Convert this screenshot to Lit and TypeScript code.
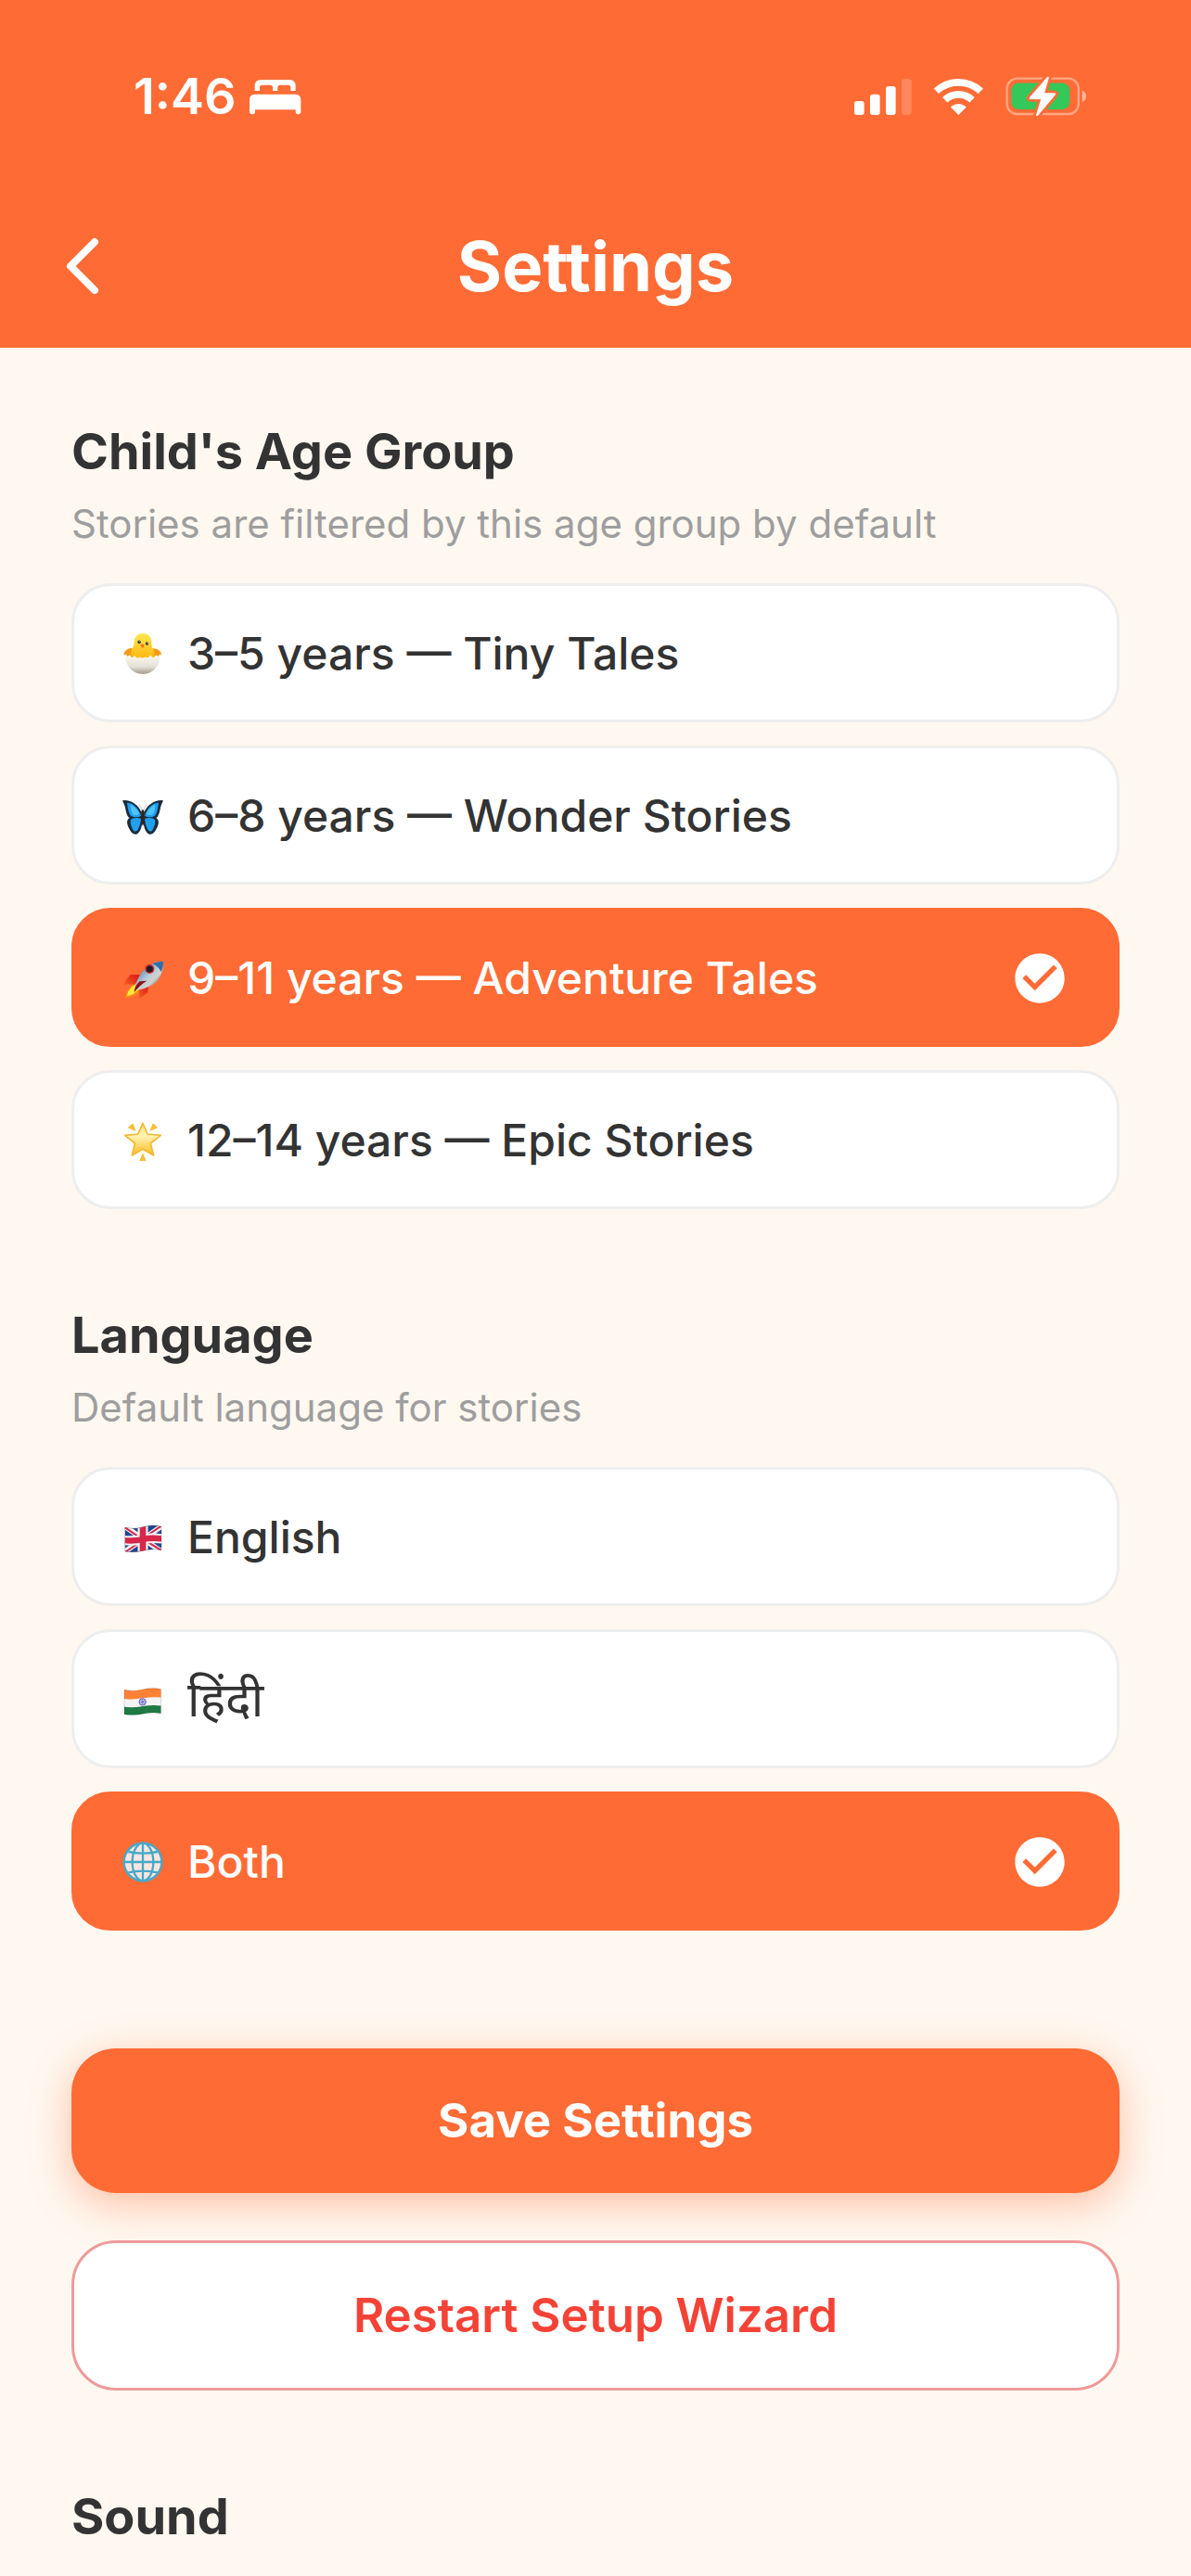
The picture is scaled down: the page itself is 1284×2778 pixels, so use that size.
import { LitElement, html, css, svg } from "lit";
import { customElement, property, state } from "lit/decorators.js";
import { classMap } from "lit/directives/class-map.js";

interface Option {
  value: string;
  label: string;
  icon: unknown;
  lang?: string;
}

const chickIcon = svg`
  <svg viewBox="65 38 136 136" aria-hidden="true">
    <defs>
      <linearGradient id="chick" x1="0" y1="0" x2="0" y2="1">
        <stop offset="0" stop-color="#ffe94f" />
        <stop offset="1" stop-color="#fdb813" />
      </linearGradient>
      <linearGradient id="shell" x1="0" y1="0" x2="0" y2="1">
        <stop offset="0" stop-color="#fbf8f0" />
        <stop offset="0.6" stop-color="#e6e1d8" />
        <stop offset="1" stop-color="#a39a8c" />
      </linearGradient>
    </defs>
    <path fill="#f79a17" d="M104 90C90 82 72 92 69 110l9-2 3 7 8-4 6 9h16zM158 90c16-6 34 4 38 18l-8 0-3 7-7-4-8 9h-16z" />
    <path fill="url(#chick)" d="M133 38c-18 0-29 13-29 29 0 12-4 17-8 25-3 8-3 18 2 28h70c5-10 4-20 0-28-4-7-6-13-6-25 0-16-11-29-29-29z" />
    <circle cx="121" cy="67" r="5.5" fill="#2e3b3a" />
    <circle cx="147" cy="72" r="5.5" fill="#2e3b3a" />
    <circle cx="123" cy="65" r="1.8" fill="#fff" />
    <circle cx="149" cy="70" r="1.8" fill="#fff" />
    <path fill="#f0721a" d="M125 76q7-6 13 1-1 8-6 10-6-3-7-11z" />
    <path fill="url(#shell)" d="M74 113l7 5 8-7 8 9 9-8 8 10 9-5 9 9 10-10 8 4 8-9 9 9 8-7 8 5 7-4c0 30-22 60-56 60s-59-27-60-61z" />
  </svg>
`;

const butterflyIcon = svg`
  <svg viewBox="67 51 132 132" aria-hidden="true">
    <path fill="none" stroke="#b5b0ad" stroke-width="2" d="M131 100Q127 88 121 80M135 100Q139 88 145 80" />
    <path fill="#1b2c3a" d="M129 106C119 80 94 64 70 66c-6 1 2 9 5 20 3 12 5 31 15 37-14 9-6 26 0 37 4 10 13 18 22 16 12-5 17-20 19-38z" />
    <path fill="#1b2c3a" d="M137 106C147 80 172 64 196 66c6 1-2 9-5 20-3 12-5 31-15 37 14 9 6 26 0 37-4 10-13 18-22 16-12-5-17-20-19-38z" />
    <path fill="#1fa0f2" d="M127 116C119 90 101 75 82 74c2 12 4 38 15 44 8 4 20 4 30-2zM127 126c-13-5-28-3-33 4-3 9 2 22 7 31 5 8 13 8 18-4 4-9 7-20 8-31z" />
    <path fill="#1fa0f2" d="M139 116c8-26 26-41 45-42-2 12-4 38-15 44-8 4-20 4-30-2zM139 126c13-5 28-3 33 4 3 9-2 22-7 31-5 8-13 8-18-4-4-9-7-20-8-31z" />
    <path fill="#4fc3fb" d="M122 111C114 94 104 85 94 81c-1 14 3 27 9 32 6 2 14 1 19-2zM144 111c8-17 18-26 28-30 1 14-3 27-9 32-6 2-14 1-19-2z" />
    <path fill="#33241f" d="M133 97c4 0 6 5 5 13 2 14 0 30-5 40-5-10-7-26-5-40-1-8 1-13 5-13z" />
  </svg>
`;

const rocketIcon = svg`
  <svg viewBox="67 66 132 132" aria-hidden="true">
    <defs>
      <linearGradient id="hull" x1="0" y1="0" x2="1" y2="1">
        <stop offset="0.2" stop-color="#4a87bd" />
        <stop offset="0.5" stop-color="#b9cbd6" />
        <stop offset="0.65" stop-color="#d3d3ce" />
        <stop offset="0.85" stop-color="#5b6f82" />
      </linearGradient>
      <linearGradient id="fin" x1="1" y1="0" x2="0" y2="1">
        <stop offset="0.3" stop-color="#e3201b" />
        <stop offset="1" stop-color="#ff9d1e" />
      </linearGradient>
    </defs>
    <path fill="url(#fin)" d="M124 120L92 121Q80 134 69 154q18-6 40-2zM152 154l-4 24q-12 12-29 22 4-22 1-34z" />
    <path fill="#ff8a16" d="M108 149q-28 13-33 47 36-2 48-24z" />
    <path fill="#ffe83b" d="M108 153q-22 12-27 37 26-5 37-23z" />
    <path fill="url(#hull)" d="M198 77c-31 0-60 20-73 43-9 15-14 28-18 39l11 11c22-4 48-14 63-32 14-17 20-41 17-61z" />
    <path fill="#2e6fa8" d="M198 77c-12 0-24 3-34 8 10 4 22 14 28 26 6-11 8-24 6-34z" />
    <path fill="#8d1216" d="M146 140q-24 14-41 38 0-20 18-36z" />
    <circle cx="155" cy="102" r="15" fill="#d3262b" />
    <circle cx="155" cy="102" r="10.5" fill="#1a1d24" />
  </svg>
`;

const starIcon = svg`
  <svg viewBox="67 51 132 132" aria-hidden="true">
    <defs>
      <linearGradient id="star" x1="0" y1="0" x2="0" y2="1">
        <stop offset="0" stop-color="#ffe27a" />
        <stop offset="0.4" stop-color="#fff3b4" />
        <stop offset="1" stop-color="#fdbb1b" />
      </linearGradient>
    </defs>
    <g fill="#f6bf3a" stroke="#f6bf3a" stroke-width="4" stroke-linejoin="round">
      <path d="M100 64l8 20-21-9zM166 64l-8 20 20-9zM133 161l8 21h-17z" />
    </g>
    <path fill="url(#star)" stroke="#f7b733" stroke-width="5" stroke-linejoin="round" d="M133 61l15 35 43 4-33 26 10 39-35-20-35 20 9-39-32-26 42-4z" />
  </svg>
`;

const ukFlagIcon = svg`
  <svg viewBox="67 45 132 132" aria-hidden="true">
    <defs>
      <clipPath id="uk-wave"><path d="M75 78q28 8 58-1t60-1v76q-28-6-58 2t-60 2z" /></clipPath>
    </defs>
    <g clip-path="url(#uk-wave)">
      <rect x="70" y="66" width="130" height="98" fill="#20458f" />
      <path stroke="#f4f4f4" stroke-width="17" d="M70 72L198 160M198 72L70 160" />
      <path stroke="#d8274a" stroke-width="6" d="M70 75L133 118M133 116L198 156M198 70L133 114M133 120L70 162" />
      <path stroke="#f4f4f4" stroke-width="33" fill="none" d="M133 66v98" />
      <path stroke="#f4f4f4" stroke-width="31" fill="none" d="M70 120q32 4 63-3t66-1" />
      <path stroke="#d8274a" stroke-width="20" fill="none" d="M133 66v98" />
      <path stroke="#d8274a" stroke-width="19" fill="none" d="M70 120q32 4 63-3t66-1" />
    </g>
    <path fill="none" stroke="#000" stroke-opacity="0.25" stroke-width="2" d="M75 78q28 8 58-1t60-1v76q-28-6-58 2t-60 2z" />
  </svg>
`;

const indiaFlagIcon = svg`
  <svg viewBox="67 570 132 132" aria-hidden="true">
    <defs>
      <clipPath id="in-wave"><path d="M73 604q28 7 60-1t59-1v78q-28-5-59 2t-60 1z" /></clipPath>
    </defs>
    <g clip-path="url(#in-wave)">
      <rect x="68" y="590" width="130" height="100" fill="#f3f3f5" />
      <path fill="#ff8136" d="M68 590h130v39q-32-4-65 2t-65 1z" />
      <path fill="#1f7a45" d="M68 659q32 4 65-2t65-1v40H68z" />
    </g>
    <circle cx="132" cy="643" r="11" fill="#dcdcf3" stroke="#5c5cc0" stroke-width="3" />
    <path stroke="#5c5cc0" stroke-width="2" d="M132 633v20M122 643h20M125 636l14 14M139 636l-14 14" />
    <path fill="none" stroke="#000" stroke-opacity="0.22" stroke-width="2" d="M73 604q28 7 60-1t59-1v78q-28-5-59 2t-60 1z" />
  </svg>
`;

const globeIcon = svg`
  <svg viewBox="67 46 132 132" aria-hidden="true">
    <circle cx="133" cy="112" r="63" fill="#fbe5df" />
    <g fill="none" stroke="#45a9c8" stroke-width="7">
      <circle cx="133" cy="112" r="61" />
      <ellipse cx="133" cy="112" rx="34" ry="61" />
      <path d="M133 52v120M73 112h120M86 79q47 10 94 0M86 146q47-10 94 0" />
    </g>
  </svg>
`;

const checkIcon = svg`
  <svg class="check" viewBox="0 0 24 24" aria-hidden="true">
    <path fill="#fff" d="M12 2C6.48 2 2 6.48 2 12s4.48 10 10 10 10-4.48 10-10S17.52 2 12 2zm-2 15l-5-5 1.41-1.41L10 14.17l7.59-7.59L19 8l-9 9z" />
  </svg>
`;

const ageOptions: Option[] = [
  { value: "3-5", label: "3–5 years — Tiny Tales", icon: chickIcon },
  { value: "6-8", label: "6–8 years — Wonder Stories", icon: butterflyIcon },
  { value: "9-11", label: "9–11 years — Adventure Tales", icon: rocketIcon },
  { value: "12-14", label: "12–14 years — Epic Stories", icon: starIcon },
];

const languageOptions: Option[] = [
  { value: "en", label: "English", icon: ukFlagIcon },
  { value: "hi", label: "हिंदी", icon: indiaFlagIcon, lang: "hi" },
  { value: "both", label: "Both", icon: globeIcon },
];

@customElement("status-bar")
export class StatusBar extends LitElement {
  static styles = css`
    :host {
      display: flex;
      align-items: center;
      justify-content: space-between;
      box-sizing: border-box;
      height: 198px;
      padding: 10px 112px 0 144px;
      color: #fff;
    }
    .group {
      display: flex;
      align-items: center;
    }
    .left {
      gap: 14px;
    }
    .right {
      gap: 22px;
    }
    .time {
      font-size: 54px;
      font-weight: 600;
      line-height: 60px;
    }
    svg {
      display: block;
      fill: #fff;
    }
    .bed {
      width: 56px;
      height: 40px;
    }
    .signal {
      width: 64px;
      height: 41px;
    }
    .wifi {
      width: 55px;
      height: 41px;
    }
    .battery {
      width: 89px;
      height: 44px;
    }
  `;

  render() {
    return html`
      <div class="group left">
        <span class="time">1:46</span>
        <svg class="bed" viewBox="687 102 168 120" aria-hidden="true">
          <path d="M687 173q0-18 18-18h130q18 0 18 18v38a8 8 0 0 1-17 0v-6H705v6a9 9 0 0 1-18 0z" />
          <path d="M704 144v-16q0-20 20-20h92q20 0 20 20v16h-16v-11q0-8-8-8h-26q-8 0-8 8v11h-16v-11q0-8-8-8h-26q-8 0-8 8v11z" />
        </svg>
      </div>
      <div class="group right">
        <svg class="signal" viewBox="120 69 192 123" aria-hidden="true">
          <rect x="123" y="144" width="32" height="45" rx="9" />
          <rect x="174" y="122" width="32" height="67" rx="9" />
          <rect x="225" y="96" width="32" height="93" rx="9" />
          <rect x="276" y="72" width="32" height="117" rx="9" opacity="0.2" />
        </svg>
        <svg class="wifi" viewBox="378 69 165 123" aria-hidden="true">
          <path fill="none" stroke="#fff" stroke-width="23" d="M388 112A105 105 0 0 1 532 112M416 140A64 64 0 0 1 504 140" />
          <path d="M460 189L436 165Q434 163 437 161A36 36 0 0 1 483 161Q486 163 484 165z" />
        </svg>
        <svg class="battery" viewBox="609 64 267 133" aria-hidden="true">
          <rect x="616" y="72" width="233" height="116" rx="33" fill="none" stroke="#fff" stroke-width="7" opacity="0.4" />
          <path opacity="0.5" d="M861 111q13 6 13 19t-13 19z" />
          <rect x="630" y="87" width="190" height="86" rx="24" fill="#34c759" />
          <path fill="#ff6b35" stroke="#ff6b35" stroke-width="24" stroke-linejoin="round" d="M749 70L692 136l39 1-17 54 57-68-37-1z" />
          <path stroke="#fff" stroke-width="7" stroke-linejoin="round" d="M749 70L692 136l39 1-17 54 57-68-37-1z" />
        </svg>
      </div>
    `;
  }
}

@customElement("option-group")
export class OptionGroup extends LitElement {
  @property() heading = "";
  @property() hint = "";
  @property() name = "";
  @property() value = "";
  @property({ attribute: false }) options: Option[] = [];

  static styles = css`
    :host {
      display: block;
    }
    .heading {
      margin: 0 0 10px;
      font-size: 54px;
      font-weight: 700;
      line-height: 76px;
    }
    .hint {
      margin: 0 0 34px;
      color: #9e9e9e;
      font-size: 42px;
      font-weight: 400;
      line-height: 60px;
    }
    .list {
      display: flex;
      flex-direction: column;
      gap: 25px;
    }
    .option {
      display: flex;
      align-items: center;
      gap: 26px;
      box-sizing: border-box;
      min-height: 150px;
      padding: 21px 51px 19px 52px;
      border: 3px solid #eee;
      border-radius: 42px;
      background: #fff;
      font-size: 48px;
      font-weight: 500;
      line-height: 68px;
      cursor: pointer;
    }
    .option.selected {
      border-color: #ff6b35;
      background: #ff6b35;
      color: #fff;
    }
    .icon {
      flex: none;
      width: 44px;
      height: 44px;
    }
    .icon svg {
      display: block;
    }
    .label {
      flex: 1;
    }
    .label:lang(hi) {
      font-size: 52px;
      font-weight: 400;
    }
    .mark {
      display: grid;
      flex: none;
    }
    .mark > * {
      grid-area: 1 / 1;
      width: 64px;
      height: 64px;
      margin: 0;
    }
    .radio {
      appearance: none;
      border-radius: 50%;
      cursor: pointer;
    }
  `;

  _select(value: string) {
    this.value = value;
    this.dispatchEvent(new CustomEvent("select-option", { detail: value }));
  }

  render() {
    return html`
      <h2 class="heading" id="heading">${this.heading}</h2>
      <p class="hint" id="hint">${this.hint}</p>
      <div class="list" role="radiogroup" aria-labelledby="heading" aria-describedby="hint">
        ${this.options.map((option) => {
          const selected = option.value === this.value;
          return html`
            <label class=${classMap({ option: true, selected })}>
              <span class="icon">${option.icon}</span>
              <span class="label" lang=${option.lang ?? "en"}>${option.label}</span>
              <span class="mark">
                ${selected ? checkIcon : ""}
                <input
                  class="radio"
                  type="radio"
                  name=${this.name}
                  .checked=${selected}
                  @change=${() => this._select(option.value)}
                />
              </span>
            </label>
          `;
        })}
      </div>
    `;
  }
}

@customElement("app-root")
export class AppRoot extends LitElement {
  @state() private _age = "9-11";
  @state() private _language = "both";

  static styles = css`
    :host {
      display: block;
      min-height: 100vh;
      background: #fff8f0;
      color: #333;
      font-family: Inter, "Noto Sans", "Noto Sans Devanagari", sans-serif;
    }
    .header {
      background: #ff6b35;
      color: #fff;
    }
    .nav {
      display: grid;
      grid-template-columns: 1fr auto 1fr;
      align-items: center;
      height: 177px;
      padding: 0 48px;
    }
    .back {
      display: flex;
      justify-self: start;
      padding: 12px;
      border: none;
      background: none;
      cursor: pointer;
    }
    .back svg {
      width: 58px;
      height: 72px;
    }
    .title {
      margin: 0;
      font-size: 74px;
      font-weight: 700;
      line-height: 100px;
    }
    .content {
      display: flex;
      flex-direction: column;
      gap: 98px;
      padding: 74px 77px 0;
    }
    .actions {
      display: flex;
      flex-direction: column;
      gap: 51px;
      padding-top: 29px;
    }
    .button {
      box-sizing: border-box;
      min-height: 156px;
      border: none;
      border-radius: 48px;
      font-family: inherit;
      font-size: 51px;
      line-height: 72px;
      cursor: pointer;
    }
    .save {
      background: #ff6b35;
      box-shadow: 0 12px 45px rgba(255, 107, 53, 0.4);
      color: #fff;
      font-weight: 700;
    }
    .restart {
      min-height: 162px;
      border: 3px solid #ef9a9a;
      background: #fff;
      color: #f44336;
      font-weight: 600;
    }
    .heading {
      margin: 0;
      font-size: 54px;
      font-weight: 700;
      line-height: 76px;
    }
  `;

  render() {
    return html`
      <header class="header">
        <status-bar></status-bar>
        <div class="nav">
          <button class="back" type="button" aria-label="Back">
            <svg viewBox="0 0 58 72" fill="none" stroke="#fff" stroke-width="8" stroke-linecap="round" stroke-linejoin="round" aria-hidden="true">
              <path d="M42 10L16 36l26 26" />
            </svg>
          </button>
          <h1 class="title">Settings</h1>
        </div>
      </header>
      <main class="content">
        <option-group
          heading="Child's Age Group"
          hint="Stories are filtered by this age group by default"
          name="age"
          .options=${ageOptions}
          .value=${this._age}
          @select-option=${(e: CustomEvent) => (this._age = e.detail)}
        ></option-group>
        <option-group
          heading="Language"
          hint="Default language for stories"
          name="language"
          .options=${languageOptions}
          .value=${this._language}
          @select-option=${(e: CustomEvent) => (this._language = e.detail)}
        ></option-group>
        <div class="actions">
          <button class="button save" type="button">Save Settings</button>
          <button class="button restart" type="button">Restart Setup Wizard</button>
        </div>
        <h2 class="heading">Sound</h2>
      </main>
    `;
  }
}
